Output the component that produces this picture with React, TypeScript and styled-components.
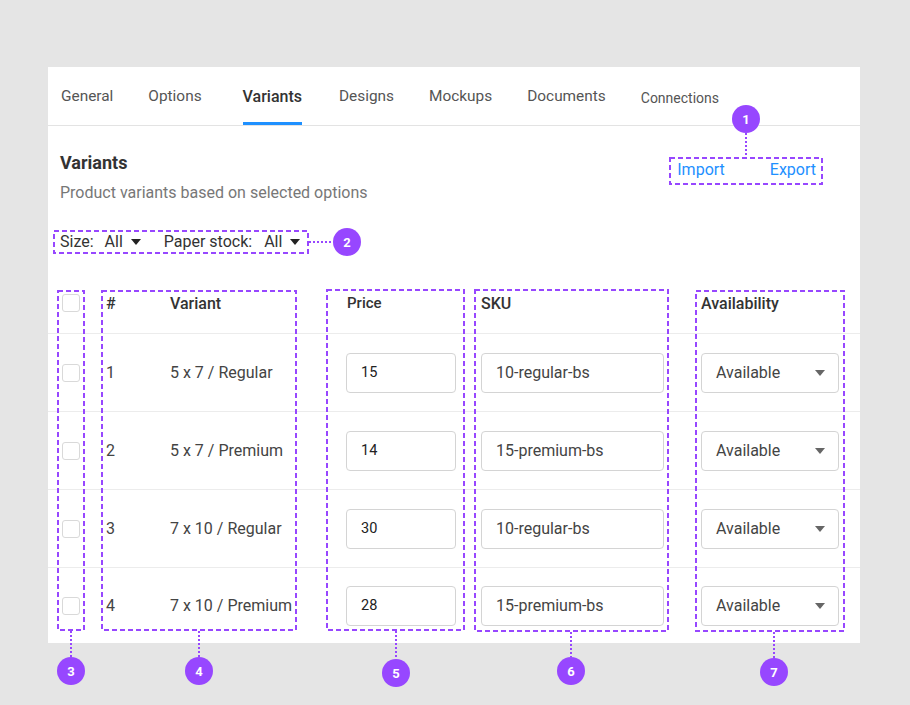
import React from "react";
import styled, { createGlobalStyle, css } from "styled-components";

const GlobalStyle = createGlobalStyle`
  html, body {
    margin: 0;
    padding: 0;
    background: #e5e5e5;
    font-family: Roboto, "Noto Sans", Arial, sans-serif;
  }
  * { box-sizing: border-box; }
`;

const PURPLE = "#9747FF";

const Page = styled.div`
  position: relative;
  width: 910px;
  height: 705px;
  padding: 67px 0 0 48px;
  overflow: hidden;
`;

const Card = styled.div`
  width: 812px;
  background: #ffffff;
  overflow: hidden;
`;

const TabBar = styled.nav`
  display: flex;
  align-items: stretch;
  height: 59px;
  padding-left: 13px;
  border-bottom: 1px solid #e3e3e3;
`;

const Tab = styled.div<{ $active?: boolean; $small?: boolean; $ml?: number; $mr?: number }>`
  position: relative;
  display: flex;
  align-items: center;
  margin-left: ${(p) => p.$ml ?? 0}px;
  margin-right: ${(p) => 36 + (p.$mr ?? 0)}px;
  font-size: 15.4px;
  color: #555;
  white-space: nowrap;
  ${(p) =>
    p.$small &&
    css`
      font-size: 14px;
      padding-top: 4px;
    `}
  ${(p) =>
    p.$active &&
    css`
      color: #333;
      font-size: 16px;
      font-weight: 500;
      &::after {
        content: "";
        position: absolute;
        left: 0;
        right: 0;
        bottom: 0;
        height: 3px;
        background: #1e90ff;
      }
    `}
`;

const Content = styled.div`
  padding: 27px 44px 0 12px;
`;

const HeaderRow = styled.div`
  display: flex;
  justify-content: space-between;
  align-items: flex-start;
`;

const Title = styled.h2`
  margin: 0;
  font-size: 18px;
  line-height: 20px;
  font-weight: 700;
  color: #333;
`;

const Subtitle = styled.p`
  margin: 10px 0 0;
  font-size: 16px;
  line-height: 20px;
  color: #777;
`;

const Actions = styled.div`
  display: flex;
  gap: 45px;
  margin-top: 7px;
`;

const LinkButton = styled.span`
  font-size: 16px;
  line-height: 20px;
  color: #1e90ff;
`;

const FilterRow = styled.div`
  display: flex;
  align-items: center;
  margin-top: 29px;
  font-size: 16px;
  line-height: 20px;
  color: #333;
`;

const FilterLabel = styled.span<{ $gap: number }>`
  margin-right: ${(p) => p.$gap}px;
`;

const FilterValue = styled.span`
  display: flex;
  align-items: center;
  gap: 8px;
  margin-right: 23px;
`;

const Caret = styled.span<{ $color?: string }>`
  display: inline-block;
  width: 0;
  height: 0;
  border-left: 5px solid transparent;
  border-right: 5px solid transparent;
  border-top: 6px solid ${(p) => p.$color ?? "#222"};
`;

const Table = styled.div`
  margin-top: 21px;
`;

const GridRow = styled.div<{ $head?: boolean }>`
  display: grid;
  grid-template-columns: 44px 64px 176px 135px 220px 1fr;
  align-items: center;
  padding-left: 14px;
  height: ${(p) => (p.$head ? 60 : 78)}px;
  ${(p) =>
    !p.$head &&
    css`
      border-top: 1px solid #ececec;
      &:last-child {
        height: 76px;
      }
    `}
`;

const HeadCell = styled.div<{ $small?: boolean }>`
  font-size: ${(p) => (p.$small ? 15 : 16)}px;
  font-weight: 500;
  color: #333;
  padding-left: ${(p) => (p.$small ? 1 : 0)}px;
`;

const Cell = styled.div`
  font-size: 16px;
  color: #444;
  white-space: nowrap;
`;

const Checkbox = styled.span`
  display: block;
  width: 18px;
  height: 18px;
  border: 1px solid #d9d9d9;
  border-radius: 3px;
  background: #fff;
`;

const Field = styled.div<{ $w: number; $small?: boolean }>`
  display: flex;
  align-items: center;
  justify-content: space-between;
  width: ${(p) => p.$w}px;
  height: 40px;
  padding: 0 13px 0 14px;
  border: 1px solid #d4d4d4;
  border-radius: 4px;
  font-size: ${(p) => (p.$small ? 14.5 : 16)}px;
  color: ${(p) => (p.$small ? "#222" : "#444")};
  background: #fff;
`;

/* annotation layer */
const Overlay = styled.div`
  position: absolute;
  inset: 0;
  pointer-events: none;
`;

const Placed = styled.div<{ $x: number; $y: number; $w: number; $h: number }>`
  position: absolute;
  left: ${(p) => p.$x}px;
  top: ${(p) => p.$y}px;
  width: ${(p) => p.$w}px;
  height: ${(p) => p.$h}px;
`;

const Badge = styled(Placed)`
  border-radius: 50%;
  background: ${PURPLE};
  color: #fff;
  font-size: 13px;
  font-weight: 700;
  display: flex;
  align-items: center;
  justify-content: center;
`;

type Box = { x1: number; y1: number; x2: number; y2: number };
type Note = {
  n: number;
  box: Box;
  badge: [number, number];
  line: [number, number, number, number];
};

const notes: Note[] = [
  { n: 1, box: { x1: 669, y1: 157, x2: 823, y2: 185 }, badge: [746, 119], line: [746, 133, 746, 157] },
  { n: 2, box: { x1: 53, y1: 230, x2: 309, y2: 254 }, badge: [347, 242], line: [309, 242, 333, 242] },
  { n: 3, box: { x1: 57, y1: 290, x2: 85, y2: 631 }, badge: [71, 671], line: [71, 631, 71, 657] },
  { n: 4, box: { x1: 101, y1: 290, x2: 297, y2: 631 }, badge: [199, 671], line: [199, 631, 199, 657] },
  { n: 5, box: { x1: 326, y1: 289, x2: 465, y2: 631 }, badge: [396, 673], line: [396, 631, 396, 659] },
  { n: 6, box: { x1: 474, y1: 289, x2: 669, y2: 632 }, badge: [571, 671], line: [571, 632, 571, 657] },
  { n: 7, box: { x1: 695, y1: 290, x2: 845, y2: 632 }, badge: [774, 672], line: [774, 632, 774, 658] },
];

const DashedBox: React.FC<{ box: Box }> = ({ box }) => {
  const w = box.x2 - box.x1;
  const h = box.y2 - box.y1;
  return (
    <Placed $x={box.x1} $y={box.y1} $w={w} $h={h}>
      <svg width={w} height={h} style={{ display: "block" }}>
        <rect
          x={1}
          y={1}
          width={w - 2}
          height={h - 2}
          fill="none"
          stroke={PURPLE}
          strokeWidth={2}
          strokeDasharray="5 3"
        />
      </svg>
    </Placed>
  );
};

const Connector: React.FC<{ line: [number, number, number, number] }> = ({ line }) => {
  const [x1, y1, x2, y2] = line;
  const left = Math.min(x1, x2) - 1;
  const top = Math.min(y1, y2) - 1;
  const w = Math.abs(x2 - x1) + 2;
  const h = Math.abs(y2 - y1) + 2;
  return (
    <Placed $x={left} $y={top} $w={w} $h={h}>
      <svg width={w} height={h} style={{ display: "block" }}>
        <line
          x1={x1 - left}
          y1={y1 - top}
          x2={x2 - left}
          y2={y2 - top}
          stroke={PURPLE}
          strokeWidth={2}
          strokeDasharray="2 2"
        />
      </svg>
    </Placed>
  );
};

const tabs: { label: string; ml?: number; mr?: number }[] = [
  { label: "General", mr: -1 },
  { label: "Options" },
  { label: "Variants", ml: 5, mr: 1 },
  { label: "Designs", mr: -1 },
  { label: "Mockups", mr: -1 },
  { label: "Documents", mr: -1 },
  { label: "Connections" },
];

const rows = [
  { id: 1, name: "5 x 7 / Regular", price: "15", sku: "10-regular-bs" },
  { id: 2, name: "5 x 7 / Premium", price: "14", sku: "15-premium-bs" },
  { id: 3, name: "7 x 10 / Regular", price: "30", sku: "10-regular-bs" },
  { id: 4, name: "7 x 10 / Premium", price: "28", sku: "15-premium-bs" },
];

export default function App() {
  return (
    <>
      <GlobalStyle />
      <Page>
        <Card>
          <TabBar>
            {tabs.map((t) => (
              <Tab
                key={t.label}
                $active={t.label === "Variants"}
                $small={t.label === "Connections"}
                $ml={t.ml}
                $mr={t.mr}
              >
                {t.label}
              </Tab>
            ))}
          </TabBar>
          <Content>
            <HeaderRow>
              <div>
                <Title>Variants</Title>
                <Subtitle>Product variants based on selected options</Subtitle>
              </div>
              <Actions>
                <LinkButton>Import</LinkButton>
                <LinkButton>Export</LinkButton>
              </Actions>
            </HeaderRow>
            <FilterRow>
              <FilterLabel $gap={11}>Size:</FilterLabel>
              <FilterValue>
                All <Caret />
              </FilterValue>
              <FilterLabel $gap={12}>Paper stock:</FilterLabel>
              <FilterValue>
                All <Caret />
              </FilterValue>
            </FilterRow>
          </Content>
          <Table>
            <GridRow $head>
              <Checkbox />
              <HeadCell>#</HeadCell>
              <HeadCell>Variant</HeadCell>
              <HeadCell $small>Price</HeadCell>
              <HeadCell>SKU</HeadCell>
              <HeadCell>Availability</HeadCell>
            </GridRow>
            {rows.map((r) => (
              <GridRow key={r.id}>
                <Checkbox />
                <Cell>{r.id}</Cell>
                <Cell>{r.name}</Cell>
                <Field $w={110} $small>
                  {r.price}
                </Field>
                <Field $w={183}>{r.sku}</Field>
                <Field $w={138}>
                  Available <Caret $color="#666" />
                </Field>
              </GridRow>
            ))}
          </Table>
        </Card>
        <Overlay>
          {notes.map((n) => (
            <React.Fragment key={n.n}>
              <DashedBox box={n.box} />
              <Connector line={n.line} />
              <Badge $x={n.badge[0] - 14} $y={n.badge[1] - 14} $w={28} $h={28}>
                {n.n}
              </Badge>
            </React.Fragment>
          ))}
        </Overlay>
      </Page>
    </>
  );
}
